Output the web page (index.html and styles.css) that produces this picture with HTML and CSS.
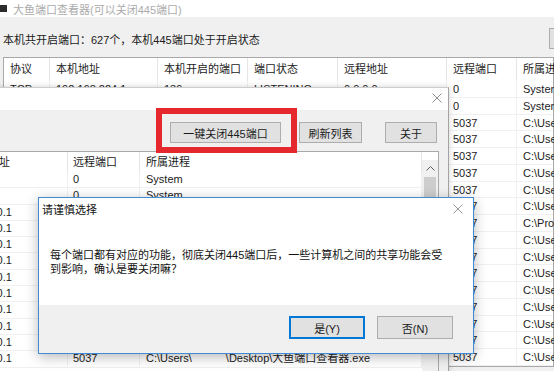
FILE: index.html
```html
<!DOCTYPE html>
<html lang="zh-CN">
<head>
    <meta charset="UTF-8">
    <title>大鱼端口查看器</title>
    <link rel="stylesheet" href="styles.css">
</head>
<body>
<div class="desk">
    <!-- ventana principal (fondo) -->
    <div class="main-win">
        <div class="main-title"><span class="app-icon"></span>大鱼端口查看器(可以关闭445端口)</div>
        <div class="main-status">
            <span>本机共开启端口：627个，本机445端口处于开启状态</span>
            <button class="btn status-btn">刷新</button>
        </div>
        <div class="list main-list">
            <div class="head"><span>协议</span><span>本机地址</span><span>本机开启的端口</span><span>端口状态</span><span>远程地址</span><span>远程端口</span><span>所属进程</span></div>
            <div class="row"><span>TCP</span><span>192.168.224.1</span><span>139</span><span>LISTENING</span><span>0.0.0.0</span><span>0</span><span>System</span></div>
            <div class="row"><span>TCP</span><span>0.0.0.0</span><span>445</span><span>LISTENING</span><span>0.0.0.0</span><span>0</span><span>System</span></div>
            <div class="row"><span>TCP</span><span>127.0.0.1</span><span>49670</span><span>ESTABLISHED</span><span>127.0.0.1</span><span>5037</span><span>C:\Users\admin\adb.exe</span></div>
            <div class="row"><span>TCP</span><span>127.0.0.1</span><span>49671</span><span>ESTABLISHED</span><span>127.0.0.1</span><span>5037</span><span>C:\Users\admin\adb.exe</span></div>
            <div class="row"><span>TCP</span><span>127.0.0.1</span><span>49672</span><span>ESTABLISHED</span><span>127.0.0.1</span><span>5037</span><span>C:\Users\admin\adb.exe</span></div>
            <div class="row"><span>TCP</span><span>127.0.0.1</span><span>49673</span><span>ESTABLISHED</span><span>127.0.0.1</span><span>5037</span><span>C:\Users\admin\adb.exe</span></div>
            <div class="row"><span>TCP</span><span>127.0.0.1</span><span>49674</span><span>ESTABLISHED</span><span>127.0.0.1</span><span>5037</span><span>C:\Users\admin\adb.exe</span></div>
            <div class="row"><span>TCP</span><span>127.0.0.1</span><span>49675</span><span>ESTABLISHED</span><span>127.0.0.1</span><span>5037</span><span>C:\Users\admin\adb.exe</span></div>
            <div class="row"><span>TCP</span><span>127.0.0.1</span><span>49676</span><span>ESTABLISHED</span><span>127.0.0.1</span><span>5037</span><span>C:\Program Files\adb.exe</span></div>
            <div class="row"><span>TCP</span><span>127.0.0.1</span><span>49677</span><span>ESTABLISHED</span><span>127.0.0.1</span><span>5037</span><span>C:\Users\admin\adb.exe</span></div>
            <div class="row"><span>TCP</span><span>127.0.0.1</span><span>49678</span><span>ESTABLISHED</span><span>127.0.0.1</span><span>5037</span><span>C:\Users\admin\adb.exe</span></div>
            <div class="row"><span>TCP</span><span>127.0.0.1</span><span>49679</span><span>ESTABLISHED</span><span>127.0.0.1</span><span>5037</span><span>C:\Users\admin\adb.exe</span></div>
            <div class="row"><span>TCP</span><span>127.0.0.1</span><span>49680</span><span>ESTABLISHED</span><span>127.0.0.1</span><span>5037</span><span>C:\Users\admin\adb.exe</span></div>
            <div class="row"><span>TCP</span><span>127.0.0.1</span><span>49681</span><span>ESTABLISHED</span><span>127.0.0.1</span><span>5037</span><span>C:\Users\admin\adb.exe</span></div>
            <div class="row"><span>TCP</span><span>127.0.0.1</span><span>49682</span><span>ESTABLISHED</span><span>127.0.0.1</span><span>5037</span><span>C:\Users\admin\adb.exe</span></div>
            <div class="row"><span>TCP</span><span>127.0.0.1</span><span>49683</span><span>ESTABLISHED</span><span>127.0.0.1</span><span>5037</span><span>C:\Users\admin\adb.exe</span></div>
            <div class="row"><span>TCP</span><span>127.0.0.1</span><span>49684</span><span>ESTABLISHED</span><span>127.0.0.1</span><span>5037</span><span>C:\Users\admin\adb.exe</span></div>
        </div>
    </div>

    <!-- segunda ventana -->
    <div class="sub-win">
        <div class="sub-title">
            <svg class="x-icon" width="10" height="10" viewBox="0 0 10 10"><path d="M0.5 0.5L9.5 9.5M9.5 0.5L0.5 9.5" stroke="#8f8f8f" stroke-width="1"/></svg>
        </div>
        <div class="sub-tools">
            <button class="btn btn-close445">一键关闭445端口</button>
            <button class="btn btn-refresh">刷新列表</button>
            <button class="btn btn-about">关于</button>
        </div>
        <div class="list sub-list">
            <div class="sub-cols">
                <div class="head"><span>本机地址</span><span>远程端口</span><span>所属进程</span></div>
                <div class="row"><span>0.0.0.0</span><span>0</span><span>System</span></div>
                <div class="row"><span>0.0.0.0</span><span>0</span><span>System</span></div>
                <div class="row"><span>127.0.0.1</span><span>5037</span><span>C:\Users\<i class="hidden-name"></i>\Desktop\大鱼端口查看器.exe</span></div>
                <div class="row"><span>127.0.0.1</span><span>5037</span><span>C:\Users\<i class="hidden-name"></i>\Desktop\大鱼端口查看器.exe</span></div>
                <div class="row"><span>127.0.0.1</span><span>5037</span><span>C:\Users\<i class="hidden-name"></i>\Desktop\大鱼端口查看器.exe</span></div>
                <div class="row"><span>127.0.0.1</span><span>5037</span><span>C:\Users\<i class="hidden-name"></i>\Desktop\大鱼端口查看器.exe</span></div>
                <div class="row"><span>127.0.0.1</span><span>5037</span><span>C:\Users\<i class="hidden-name"></i>\Desktop\大鱼端口查看器.exe</span></div>
                <div class="row"><span>127.0.0.1</span><span>5037</span><span>C:\Users\<i class="hidden-name"></i>\Desktop\大鱼端口查看器.exe</span></div>
                <div class="row"><span>127.0.0.1</span><span>5037</span><span>C:\Users\<i class="hidden-name"></i>\Desktop\大鱼端口查看器.exe</span></div>
                <div class="row"><span>127.0.0.1</span><span>5037</span><span>C:\Users\<i class="hidden-name"></i>\Desktop\大鱼端口查看器.exe</span></div>
                <div class="row"><span>127.0.0.1</span><span>5037</span><span>C:\Users\<i class="hidden-name"></i>\Desktop\大鱼端口查看器.exe</span></div>
                <div class="row"><span>127.0.0.1</span><span>5037</span><span>C:\Users\<i class="hidden-name"></i>\Desktop\大鱼端口查看器.exe</span></div>
            </div>
            <div class="vscroll">
                <div class="vs-up"><svg width="9" height="5" viewBox="0 0 9 5"><path d="M0.5 4.5L4.5 0.5L8.5 4.5" fill="none" stroke="#606060" stroke-width="1"/></svg></div>
                <div class="vs-thumb"></div>
            </div>
        </div>
    </div>

    <!-- marca roja sobre el botón -->
    <div class="highlight"></div>

    <!-- diálogo de confirmación -->
    <div class="dialog">
        <div class="dlg-title">
            <span>请谨慎选择</span>
            <svg class="x-icon" width="10" height="10" viewBox="0 0 10 10"><path d="M0.5 0.5L9.5 9.5M9.5 0.5L0.5 9.5" stroke="#9a9a9a" stroke-width="1"/></svg>
        </div>
        <div class="dlg-body">
            <p>每个端口都有对应的功能，彻底关闭445端口后，一些计算机之间的共享功能会受<br>到影响，确认是要关闭嘛？</p>
        </div>
        <div class="dlg-foot">
            <button class="btn dlg-btn default">是(Y)</button>
            <button class="btn dlg-btn">否(N)</button>
        </div>
    </div>
</div>
</body>
</html>
```

FILE: styles.css
```css
* { box-sizing: border-box; }
body { margin: 0; font-family: "Liberation Sans", "Noto Sans CJK SC", sans-serif; font-size: 11px; color: #1b1b1b; }
.desk { position: relative; width: 554px; height: 371px; overflow: hidden; background: #f0f0f0; }

/* botones estilo windows */
.btn {
    height: 21px;
    padding: 0;
    font: inherit;
    color: #1b1b1b;
    background-color: #e1e1e1;
    border: 1px solid #adadad;
}

/* ventana principal */
.main-title {
    height: 17px;
    background: #fff;
    display: flex;
    align-items: center;
    gap: 6px;
    color: #ababab;
}
.app-icon { width: 7px; height: 7px; background: #2b2b2b; }
.main-status {
    height: 40px;
    display: flex;
    justify-content: space-between;
    align-items: flex-start;
    padding: 16px 0 0 3px;
    line-height: 14px;
}
.status-btn { width: 75px; margin: -5px -70px 0 0; }

.list { background: #fff; border: 1px solid #a9a9a9; }
.head span, .row span {
    display: block;
    white-space: nowrap;
    overflow: hidden;
    padding-left: 6px;
}
.head span { border-right: 1px solid #e5e5e5; }
.row span { border-right: 1px solid #f0f0f0; }
.row { border-bottom: 1px solid #f0f0f0; }

.main-list { margin-left: 3px; }
.main-list .head, .main-list .row {
    display: grid;
    grid-template-columns: 46px 108px 90px 90px 109px 70px 300px;
}
.main-list .head { height: 23px; line-height: 23px; }
.main-list .row { height: 16.75px; line-height: 16.5px; }

/* segunda ventana */
.sub-win {
    position: absolute;
    left: -100px;
    top: 87px;
    width: 549px;
    height: 300px;
    background: #f0f0f0;
    border-top: 1px solid #cdcdcd;
    border-right: 1px solid #a3a3a3;
    box-shadow: 0 0 6px rgba(0, 0, 0, 0.18);
}
.sub-title {
    height: 22px;
    background: #fff;
    display: flex;
    justify-content: flex-end;
    align-items: flex-start;
    padding: 5px 6px 0 0;
}
.sub-tools {
    height: 41px;
    display: flex;
    justify-content: flex-end;
    align-items: flex-start;
    padding: 12px 11px 0 0;
}
.btn-close445 { width: 111px; }
.btn-refresh { width: 63px; margin-left: 18px; }
.btn-about { width: 52px; margin-left: 23px; }

.sub-list { margin: 0 9px 0 3px; height: 240px; display: flex; }
.sub-cols { flex: 1; }
.sub-list .head, .sub-list .row {
    display: grid;
    grid-template-columns: 164px 72px 1fr;
}
.sub-list .head { height: 20px; line-height: 20px; }
.sub-list .row { height: 16.3px; line-height: 15.3px; }
.sub-list .head span:first-child, .sub-list .row span:first-child { padding-left: 62px; }
.sub-list .row span:nth-child(2) { padding-left: 5px; }
.sub-list .head span:nth-child(2) { padding-left: 5px; }
.hidden-name { display: inline-block; width: 34px; }

.vscroll { width: 16px; margin-top: 8px; background: #f0f0f0; }
.vs-up { height: 17px; display: flex; align-items: center; justify-content: center; }
.vs-thumb { height: 60px; margin: 0 2px; background: #cdcdcd; }

/* marca roja */
.highlight {
    position: absolute;
    left: 156px;
    top: 108px;
    width: 141px;
    height: 45px;
    border: 6px solid #e5282d;
}

/* dialogo */
.dialog {
    position: absolute;
    left: 38px;
    top: 197px;
    width: 436px;
    height: 157px;
    background: #fff;
    border: 1px solid #3f8bd6;
    box-shadow: 0 3px 12px rgba(0, 0, 0, 0.28);
    display: flex;
    flex-direction: column;
}
.dlg-title {
    height: 22px;
    display: flex;
    justify-content: space-between;
    align-items: center;
    padding: 0 10px 0 3px;
    color: #111;
}
.dlg-body { height: 85px; padding: 28px 0 0 11px; }
.dlg-body p { margin: 0; line-height: 14px; color: #111; }
.dlg-foot {
    flex: 1;
    background: #f0f0f0;
    display: flex;
    justify-content: flex-end;
    align-items: flex-start;
    gap: 12px;
    padding: 11px 20px 0 0;
}
.dlg-btn { width: 76px; height: 23px; }
.dlg-btn.default { border: 2px solid #0078d7; }
```
